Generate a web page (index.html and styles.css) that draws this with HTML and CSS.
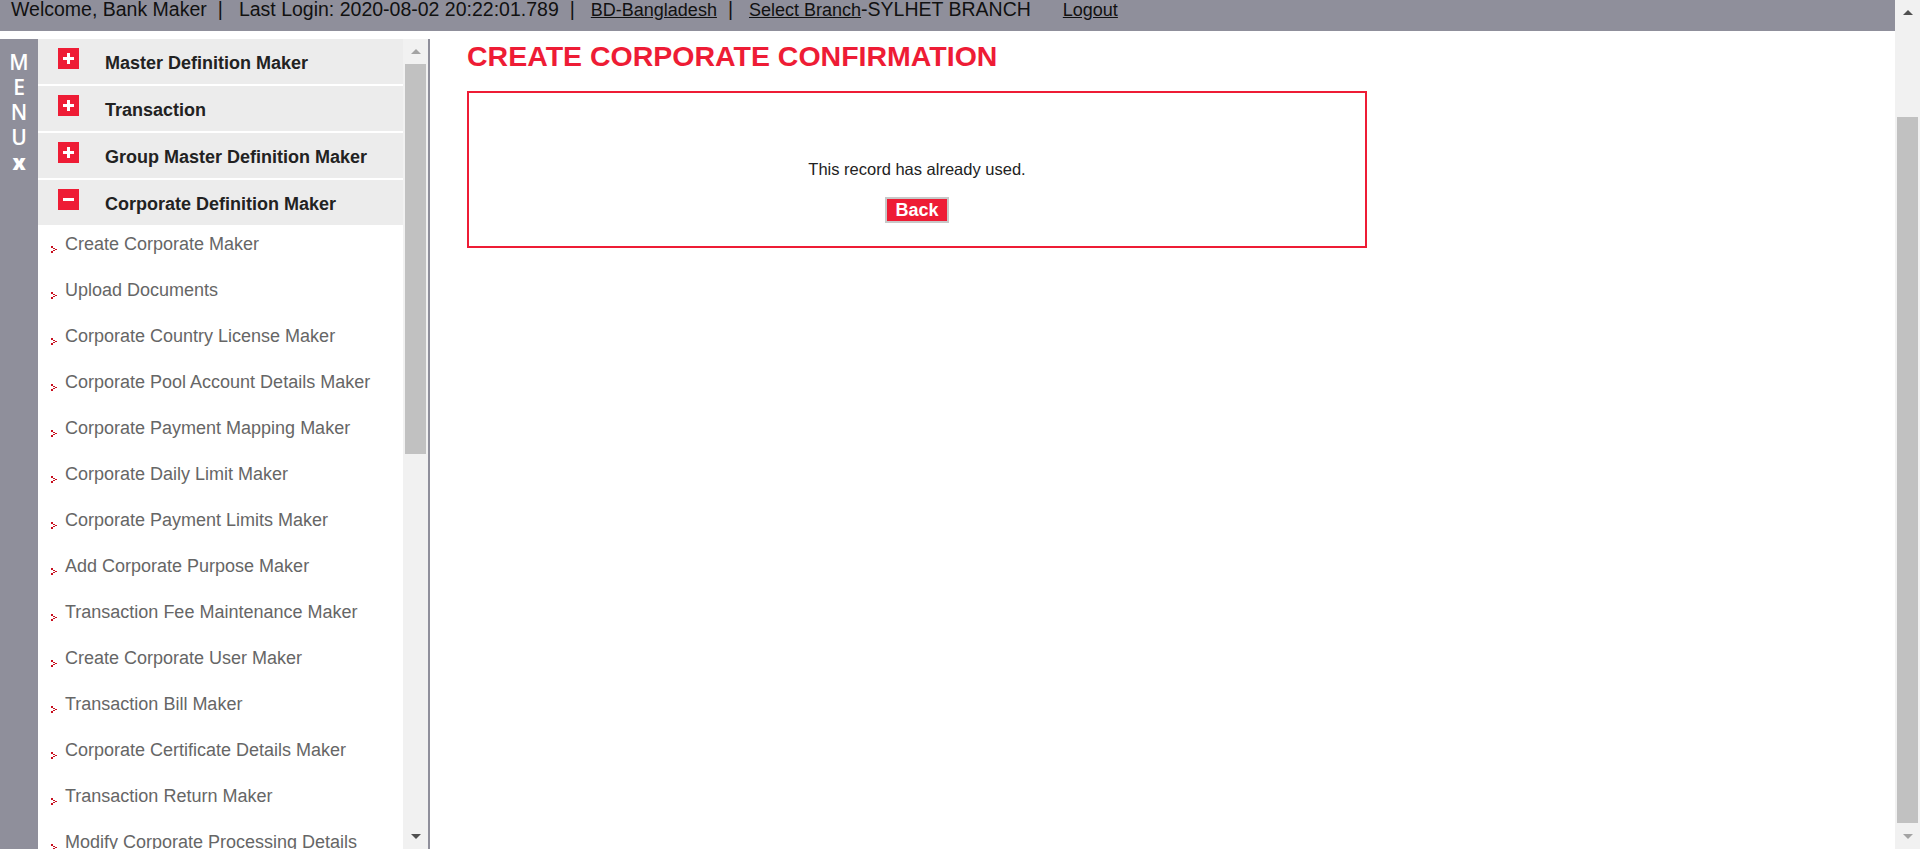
FILE: index.html
```html
<!DOCTYPE html>
<html lang="en">
<head>
<meta charset="utf-8">
<title>Create Corporate Confirmation</title>
<link rel="stylesheet" href="styles.css">
</head>
<body>
<div class="page">
  <div class="frame">
    <header class="topbar">
      <span>Welcome, Bank Maker</span><span class="sep">|</span>
      <span>Last Login: 2020-08-02 20:22:01.789</span><span class="sep">|</span>
      <a href="#">BD-Bangladesh</a><span class="sep">|</span>
      <a href="#">Select Branch</a><span>-SYLHET BRANCH</span>
      <a href="#" class="logout">Logout</a>
    </header>
    <div class="main">
      <aside class="menu-strip">
        <span>M</span><span>E</span><span>N</span><span>U</span><span class="close">x</span>
      </aside>
      <nav class="menu-panel">
        <div class="menu-head">
          <svg class="ico" viewBox="0 0 21 21"><rect width="21" height="21" fill="#ee1c35"/><path d="M5 9h11v3H5zM9 5h3v11H9z" fill="#fff"/></svg>
          <span class="head-text">Master Definition Maker</span>
        </div>
        <div class="menu-head">
          <svg class="ico" viewBox="0 0 21 21"><rect width="21" height="21" fill="#ee1c35"/><path d="M5 9h11v3H5zM9 5h3v11H9z" fill="#fff"/></svg>
          <span class="head-text">Transaction</span>
        </div>
        <div class="menu-head">
          <svg class="ico" viewBox="0 0 21 21"><rect width="21" height="21" fill="#ee1c35"/><path d="M5 9h11v3H5zM9 5h3v11H9z" fill="#fff"/></svg>
          <span class="head-text">Group Master Definition Maker</span>
        </div>
        <div class="menu-head">
          <svg class="ico" viewBox="0 0 21 21"><rect width="21" height="21" fill="#ee1c35"/><path d="M5 9h11v3H5z" fill="#fff"/></svg>
          <span class="head-text">Corporate Definition Maker</span>
        </div>
        <ul class="sub">
          <li><svg class="arr" viewBox="0 0 6 7"><path d="M0 0h2v2H0zM2 2h2v1H2zM4 3h2v1H4zM2 4h2v1H2zM0 5h2v2H0z" fill="#c8101f"/></svg><span>Create Corporate Maker</span></li>
          <li><svg class="arr" viewBox="0 0 6 7"><path d="M0 0h2v2H0zM2 2h2v1H2zM4 3h2v1H4zM2 4h2v1H2zM0 5h2v2H0z" fill="#c8101f"/></svg><span>Upload Documents</span></li>
          <li><svg class="arr" viewBox="0 0 6 7"><path d="M0 0h2v2H0zM2 2h2v1H2zM4 3h2v1H4zM2 4h2v1H2zM0 5h2v2H0z" fill="#c8101f"/></svg><span>Corporate Country License Maker</span></li>
          <li><svg class="arr" viewBox="0 0 6 7"><path d="M0 0h2v2H0zM2 2h2v1H2zM4 3h2v1H4zM2 4h2v1H2zM0 5h2v2H0z" fill="#c8101f"/></svg><span>Corporate Pool Account Details Maker</span></li>
          <li><svg class="arr" viewBox="0 0 6 7"><path d="M0 0h2v2H0zM2 2h2v1H2zM4 3h2v1H4zM2 4h2v1H2zM0 5h2v2H0z" fill="#c8101f"/></svg><span>Corporate Payment Mapping Maker</span></li>
          <li><svg class="arr" viewBox="0 0 6 7"><path d="M0 0h2v2H0zM2 2h2v1H2zM4 3h2v1H4zM2 4h2v1H2zM0 5h2v2H0z" fill="#c8101f"/></svg><span>Corporate Daily Limit Maker</span></li>
          <li><svg class="arr" viewBox="0 0 6 7"><path d="M0 0h2v2H0zM2 2h2v1H2zM4 3h2v1H4zM2 4h2v1H2zM0 5h2v2H0z" fill="#c8101f"/></svg><span>Corporate Payment Limits Maker</span></li>
          <li><svg class="arr" viewBox="0 0 6 7"><path d="M0 0h2v2H0zM2 2h2v1H2zM4 3h2v1H4zM2 4h2v1H2zM0 5h2v2H0z" fill="#c8101f"/></svg><span>Add Corporate Purpose Maker</span></li>
          <li><svg class="arr" viewBox="0 0 6 7"><path d="M0 0h2v2H0zM2 2h2v1H2zM4 3h2v1H4zM2 4h2v1H2zM0 5h2v2H0z" fill="#c8101f"/></svg><span>Transaction Fee Maintenance Maker</span></li>
          <li><svg class="arr" viewBox="0 0 6 7"><path d="M0 0h2v2H0zM2 2h2v1H2zM4 3h2v1H4zM2 4h2v1H2zM0 5h2v2H0z" fill="#c8101f"/></svg><span>Create Corporate User Maker</span></li>
          <li><svg class="arr" viewBox="0 0 6 7"><path d="M0 0h2v2H0zM2 2h2v1H2zM4 3h2v1H4zM2 4h2v1H2zM0 5h2v2H0z" fill="#c8101f"/></svg><span>Transaction Bill Maker</span></li>
          <li><svg class="arr" viewBox="0 0 6 7"><path d="M0 0h2v2H0zM2 2h2v1H2zM4 3h2v1H4zM2 4h2v1H2zM0 5h2v2H0z" fill="#c8101f"/></svg><span>Corporate Certificate Details Maker</span></li>
          <li><svg class="arr" viewBox="0 0 6 7"><path d="M0 0h2v2H0zM2 2h2v1H2zM4 3h2v1H4zM2 4h2v1H2zM0 5h2v2H0z" fill="#c8101f"/></svg><span>Transaction Return Maker</span></li>
          <li><svg class="arr" viewBox="0 0 6 7"><path d="M0 0h2v2H0zM2 2h2v1H2zM4 3h2v1H4zM2 4h2v1H2zM0 5h2v2H0z" fill="#c8101f"/></svg><span>Modify Corporate Processing Details</span></li>
        </ul>
      </nav>
      <div class="vscroll inner">
        <div class="sbtn"><span class="tri up off"></span></div>
        <div class="track"><div class="thumb inner-thumb"></div></div>
        <div class="sbtn"><span class="tri down"></span></div>
      </div>
      <section class="content">
        <h1 class="title">CREATE CORPORATE CONFIRMATION</h1>
        <div class="msgbox">
          <p class="msg">This record has already used.</p>
          <button class="back" type="button">Back</button>
        </div>
      </section>
    </div>
  </div>
  <div class="vscroll outer">
    <div class="sbtn"><span class="tri up"></span></div>
    <div class="track"><div class="thumb outer-thumb"></div></div>
    <div class="sbtn"><span class="tri down off"></span></div>
  </div>
</div>
</body>
</html>
```

FILE: styles.css
```css
* { box-sizing: border-box; }
html, body { margin: 0; padding: 0; }
body {
  font-family: "Liberation Sans", Arial, sans-serif;
  background: #fff;
  overflow: hidden;
}
.page { display: flex; height: 849px; }
.frame { flex: 1; display: flex; flex-direction: column; min-width: 0; }

.topbar {
  height: 31px;
  flex: none;
  background: #8f8f9b;
  display: flex;
  align-items: baseline;
  padding-left: 11px;
  font-size: 19.5px;
  line-height: 19px;
  color: #111;
  white-space: nowrap;
}
.topbar a { color: #111; text-decoration: underline; font-size: 18px; }
.sep { margin: 0 16px 0 11px; }
.logout { margin-left: 32px; }

.main { flex: 1; display: flex; margin-top: 8px; min-height: 0; }

.menu-strip {
  width: 38px;
  flex: none;
  background: #8f8f9b;
  display: flex;
  flex-direction: column;
  align-items: center;
  padding-top: 11px;
  color: #fff;
  font: 600 21px/25px "Open Sans", "DejaVu Sans", sans-serif;
}
.menu-strip .close { font-weight: 800; }

.menu-panel { width: 365px; flex: none; overflow: hidden; background: #fff; }
.menu-head {
  height: 47px;
  background: #ececec;
  border-bottom: 2px solid #fff;
  display: flex;
  align-items: flex-start;
  padding-left: 20px;
}
.ico { width: 21px; height: 21px; margin-top: 9px; flex: none; }
.head-text {
  margin: 13px 0 0 26px;
  font-weight: bold;
  font-size: 18px;
  line-height: 22px;
  color: #222;
  white-space: nowrap;
}
.sub { list-style: none; margin: 0; padding: 0; }
.sub li {
  height: 46px;
  display: flex;
  align-items: flex-start;
  padding: 6px 0 0 13px;
  font-size: 18px;
  line-height: 22px;
  color: #666;
  white-space: nowrap;
}
.arr { width: 6px; height: 7px; margin: 13px 8px 0 0; flex: none; }

.vscroll {
  width: 25px;
  flex: none;
  background: #f1f1f1;
  display: flex;
  flex-direction: column;
}
.vscroll.inner { border-right: 2px solid #8f8f9b; width: 27px; }
.sbtn { height: 25px; flex: none; display: flex; align-items: center; justify-content: center; }
.track { flex: 1; padding: 0 2px; }
.thumb { background: #c1c1c1; }
.inner-thumb { height: 390px; }
.outer-thumb { margin-top: 92px; height: 706px; }
.tri { width: 0; height: 0; border-left: 5px solid transparent; border-right: 5px solid transparent; }
.tri.up { border-bottom: 5px solid #505050; }
.tri.down { border-top: 5px solid #505050; }
.tri.up.off { border-bottom-color: #a3a3a3; }
.tri.down.off { border-top-color: #a3a3a3; }

.content { flex: 1; padding: 1px 0 0 37px; min-width: 0; }
.title {
  margin: 0;
  font-size: 28.5px;
  line-height: 32px;
  font-weight: bold;
  color: #ee1c35;
}
.msgbox {
  width: 900px;
  margin-top: 19px;
  border: 2px solid #ee1c35;
  padding: 66px 0 23px;
  text-align: center;
}
.msg {
  margin: 0 0 18px;
  font-size: 16.5px;
  line-height: 20px;
  color: #222;
}
.back {
  height: 26px;
  padding: 0 8px;
  border: 2px solid #c8c8c8;
  background: #ee1c35;
  color: #fff;
  font-family: "Liberation Sans", Arial, sans-serif;
  font-weight: bold;
  font-size: 18px;
  line-height: 22px;
  cursor: pointer;
}
```
